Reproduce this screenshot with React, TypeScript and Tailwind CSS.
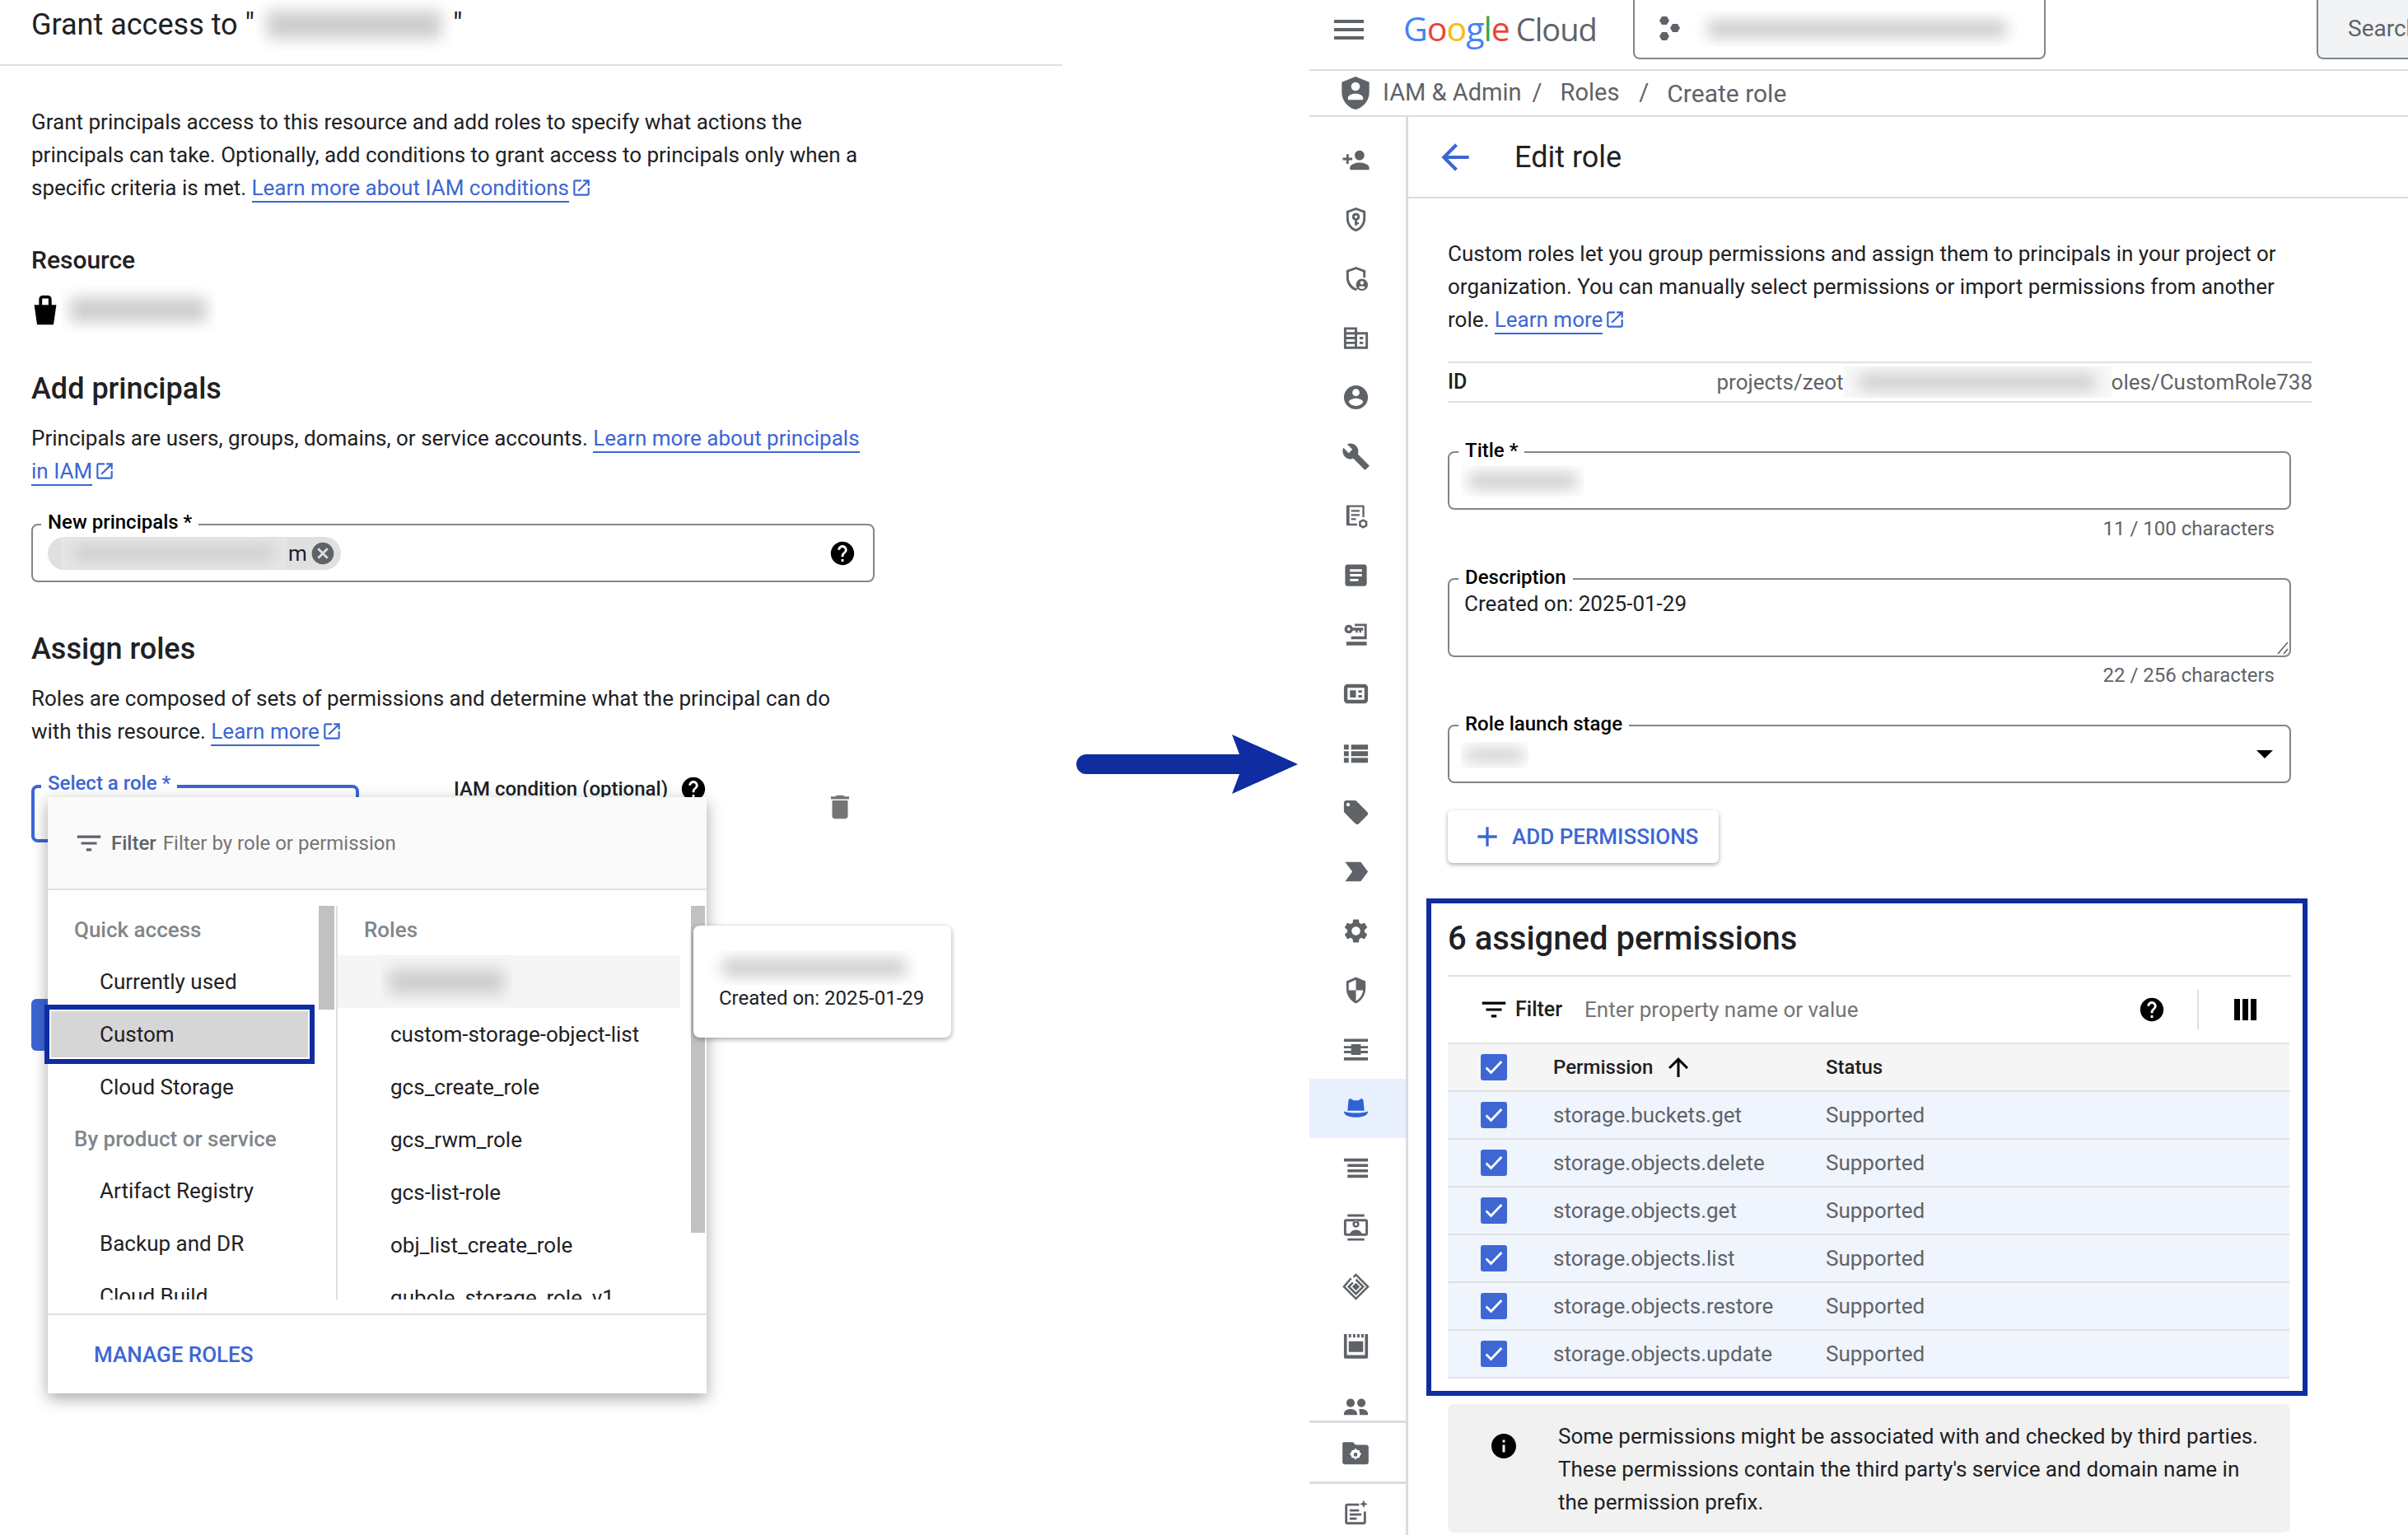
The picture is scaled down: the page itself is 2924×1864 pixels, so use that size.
import type { ReactNode } from "react";

const blue = "text-[#3c66d4]";

function Svg({ size = 35, className = "fill-[#5f6368]", children }: { size?: number; className?: string; children: ReactNode }) {
  return (
    <svg width={size} height={size} viewBox="0 0 24 24" className={`shrink-0 ${className}`}>
      {children}
    </svg>
  );
}

function External() {
  return (
    <svg width="26" height="26" viewBox="0 0 24 24" className="inline-block fill-[#3c66d4] ml-[2px] align-[-4px]">
      <path d="M19 19H5V5h7V3H5c-1.11 0-2 .9-2 2v14c0 1.1.89 2 2 2h14c1.1 0 2-.9 2-2v-7h-2v7zM14 3v2h3.59l-9.83 9.83 1.41 1.41L19 6.41V10h2V3h-7z" />
    </svg>
  );
}

function Link({ children }: { children: ReactNode }) {
  return <span className={`${blue} border-b-2 border-[#3c66d4] pb-[1px]`}>{children}</span>;
}

function Help({ size = 34 }: { size?: number }) {
  return (
    <Svg size={size} className="fill-black">
      <path d="M12 2C6.48 2 2 6.48 2 12s4.48 10 10 10 10-4.48 10-10S17.52 2 12 2zm1 17h-2v-2h2v2zm2.07-7.75l-.9.92C13.45 12.9 13 13.5 13 15h-2v-.5c0-1.1.45-2.1 1.17-2.83l1.24-1.26c.37-.36.59-.86.59-1.41 0-1.1-.9-2-2-2s-2 .9-2 2H8c0-2.21 1.79-4 4-4s4 1.79 4 4c0 .88-.36 1.68-.93 2.25z" />
    </Svg>
  );
}

function FilterIcon({ className }: { className: string }) {
  return (
    <Svg size={38} className={className}>
      <path d="M10 18h4v-2h-4v2zM3 6v2h18V6H3zm3 7h12v-2H6v2z" />
    </Svg>
  );
}

function Blur({ className, bg = "bg-white" }: { className: string; bg?: string }) {
  return (
    <div className={`overflow-hidden flex items-center justify-center ${bg} ${className}`}>
      <div className="w-[88%] h-[52%] bg-[#cdcdcd] blur-[9px]" />
    </div>
  );
}

function Legend({ children, className = "text-black -top-[17px] left-[11px]" }: { children: ReactNode; className?: string }) {
  return (
    <span className={`absolute bg-white px-[8px] text-[24px] leading-[28px] font-medium ${className}`}>
      {children}
    </span>
  );
}

const sideIcons: ReactNode[] = [
  <path key="a" d="M15 12c2.21 0 4-1.79 4-4s-1.79-4-4-4-4 1.79-4 4 1.79 4 4 4zm-9-2V7H4v3H1v2h3v3h2v-3h3v-2H6zm9 4c-2.67 0-8 1.34-8 4v2h16v-2c0-2.66-5.33-4-8-4z" />,
  <path key="b" fillRule="evenodd" d="M12 2 4 5v6.09c0 5.05 3.41 9.76 8 10.91 4.59-1.15 8-5.86 8-10.91V5l-8-3zm6 9.09c0 4-2.55 7.7-6 8.83-3.45-1.13-6-4.82-6-8.83V6.31l6-2.25 6 2.25v4.78zM12 6.5a3.2 3.2 0 0 0-1 6.24V17h2v-1h1.5v-1.6H13v-1.66A3.2 3.2 0 0 0 12 6.5zm0 2a1.2 1.2 0 1 1 0 2.4 1.2 1.2 0 0 1 0-2.4z" />,
  <path key="c" fillRule="evenodd" d="M12 2 4 5v6.09c0 5.05 3.41 9.76 8 10.91l1.5-1.8c-3.9-.6-7.5-4.9-7.5-9.11V6.31l6-2.25 6 2.25V11h2V5l-8-3zm5 10a5 5 0 1 0 0 10 5 5 0 0 0 0-10zm0 1.8a1.5 1.5 0 1 1 0 3 1.5 1.5 0 0 1 0-3zm0 6.7c-1.1 0-2-.5-2.7-1.3.6-.7 1.7-1 2.7-1s2.1.3 2.7 1c-.7.8-1.6 1.3-2.7 1.3z" />,
  <path key="d" fillRule="evenodd" d="M2 3h11v4h9v14H2V3zm2 2v2h7V5H4zm0 4v2h7V9H4zm0 4v2h7v-2H4zm0 4v2h7v-2H4zm9-8v10h7V9h-7zm2 2h3v2h-3v-2zm0 4h3v2h-3v-2z" />,
  <path key="e" d="M12 2C6.48 2 2 6.48 2 12s4.48 10 10 10 10-4.48 10-10S17.52 2 12 2zm0 3c1.66 0 3 1.34 3 3s-1.34 3-3 3-3-1.34-3-3 1.34-3 3-3zm0 14.2c-2.5 0-4.71-1.28-6-3.22.03-1.99 4-3.08 6-3.08 1.99 0 5.97 1.09 6 3.08-1.29 1.94-3.5 3.22-6 3.22z" />,
  <path key="f" d="M22.7 19l-9.1-9.1c.9-2.3.4-5-1.5-6.9-2-2-5-2.4-7.4-1.3L9 6 6 9 1.6 4.7C.4 7.1.9 10.1 2.9 12.1c1.9 1.9 4.6 2.4 6.9 1.5l9.1 9.1c.4.4 1 .4 1.4 0l2.3-2.3c.5-.4.5-1.1.1-1.4z" />,
  <path key="g" fillRule="evenodd" d="M5 3h13c.6 0 1 .4 1 1v9h-1.6V4.6H6.6v13.8H13V20H5c-.6 0-1-.4-1-1V4c0-.6.4-1 1-1zm3 4h7v1.6H8V7zm0 3.4h7V12H8v-1.6zm0 3.4h4v1.6H8v-1.6zM18 14.5l3.5 2v4L18 22.5l-3.5-2v-4l3.500-2zm0 2.200a1.800 1.800 0 1 0 0 3.600 1.800 1.800 0 0 0 0-3.600z" />,
  <path key="h" d="M19 3H5c-1.1 0-2 .9-2 2v14c0 1.1.9 2 2 2h14c1.1 0 2-.9 2-2V5c0-1.1-.9-2-2-2zm-5 14H7v-2h7v2zm3-4H7v-2h10v2zm0-4H7V7h10v2z" />,
  <path key="i" fillRule="evenodd" d="M4 18h17v3H4v-3zM11 3h10v13H8v-2.500h11V5h-8V3zM6 4a3.500 3.500 0 0 1 3.300 2.300H18v2.400h-1.500v1.800h-1.700V8.700h-1.300v1.800h-1.700V8.700H9.300A3.500 3.500 0 1 1 6 4zm0 2.200a1.300 1.300 0 1 0 0 2.600 1.300 1.300 0 0 0 0-2.600z" />,
  <path key="j" fillRule="evenodd" d="M5 4h14a3 3 0 0 1 3 3v10a3 3 0 0 1-3 3H5a3 3 0 0 1-3-3V7a3 3 0 0 1 3-3zm0 3v10h14V7H5zm2 2h5v6H7V9zm7 0h3v2h-3V9zm0 4h3v2h-3v-2z" />,
  <path key="k" d="M2 5h4v4H2zM8 5h14v4H8zM2 10.500h4v4H2zM8 10.500h14v4H8zM2 16h4v4H2zM8 16h14v4H8z" />,
  <path key="l" d="M21.410 11.580l-9-9C12.050 2.220 11.550 2 11 2H4c-1.100 0-2 .9-2 2v7c0 .55.22 1.050.59 1.420l9 9c.36.36.86.58 1.410.58s1.050-.22 1.410-.59l7-7c.37-.36.59-.86.59-1.410s-.23-1.060-.59-1.420zM5.500 7C4.670 7 4 6.330 4 5.500S4.670 4 5.500 4 7 4.670 7 5.500 6.330 7 5.500 7z" />,
  <path key="m" d="M3 20h13l6-8-6-8H3l6 8z" />,
  <path key="n" d="M19.140 12.940c.04-.3.06-.61.06-.94 0-.32-.02-.64-.07-.94l2.030-1.580c.18-.14.23-.41.12-.61l-1.920-3.320c-.12-.22-.37-.29-.59-.22l-2.390.96c-.5-.38-1.030-.7-1.620-.94l-.36-2.540c-.04-.24-.24-.41-.48-.41h-3.840c-.24 0-.43.17-.47.41l-.36 2.540c-.59.24-1.130.57-1.620.94l-2.390-.96c-.22-.08-.47 0-.59.22L2.740 8.870c-.12.21-.08.47.12.61l2.030 1.580c-.05.3-.09.63-.09.94s.02.64.07.94l-2.030 1.580c-.18.14-.23.41-.12.61l1.920 3.320c.12.22.37.29.59.22l2.390-.96c.5.38 1.030.7 1.620.94l.36 2.540c.05.24.24.41.48.41h3.840c.24 0 .44-.17.47-.41l.36-2.540c.59-.24 1.130-.56 1.620-.94l2.390.96c.22.08.47 0 .59-.22l1.920-3.320c.12-.22.07-.47-.12-.61l-2.010-1.580zM12 15.600c-1.980 0-3.600-1.620-3.600-3.600s1.620-3.600 3.600-3.600 3.600 1.620 3.600 3.600-1.620 3.600-3.600 3.600z" />,
  <path key="o" d="M12 1 4 4.500v6c0 5.500 3.400 10.500 8 12.500 4.600-2 8-7 8-12.500v-6L12 1zm0 11h6c-.5 3.900-2.800 7.400-6 8.800V12H6V6l6-2.700V12z" />,
  <path key="p" d="M2 3h20v2.500H2zM2 18.500h20V21H2zM8 7.500h8V9h6v2h-6v2h6v2h-6v1.500H8V15H2v-2h6v-2H2V9h6z" />,
  <path key="q" d="M7.500 3.500 10 5h4l2.500-1.500c1 0 1.500.8 1.700 1.700l.8 8.300H5l.8-8.300c.2-.9.700-1.700 1.700-1.700zM2 14c2 .9 6 1.400 10 1.400S20 14.900 22 14c0 3.300-4 5-10 5S2 17.300 2 14z" />,
  <path key="r" d="M2 4h20v2.500H2zM5 8.500h17V11H5zM5 13h17v2.500H5zM5 17.500h17V20H5z" />,
  <path key="s" fillRule="evenodd" d="M5 1h14v2H5V1zm0 20h14v2H5v-2zM4 5h16a2 2 0 0 1 2 2v10a2 2 0 0 1-2 2H4a2 2 0 0 1-2-2V7a2 2 0 0 1 2-2zm0 2v10h3.200c.6-2 2.700-3 4.800-3s4.200 1 4.800 3H20V7H4zm8-.5a2.800 2.800 0 1 1 0 5.600 2.800 2.800 0 0 1 0-5.600zm0 1.700a1.100 1.100 0 1 0 0 2.200 1.100 1.100 0 0 0 0-2.200z" />,
  <g key="t" className="fill-none stroke-[#5f6368] stroke-[1.7]">
    <path d="M8 5l-6 7 10 10 10-10L12 2l-2 2" />
    <path d="M12 6l6 6-6 6-6-6 3.500-3.500" />
    <path d="M12 10l2 2-2 2-2-2z" className="fill-[#5f6368]" />
  </g>,
  <path key="u" fillRule="evenodd" d="M2 2h2.500v17.500h15V2H22v19a1.500 1.500 0 0 1-1.500 1.500h-17A1.500 1.500 0 0 1 2 21V2zm4 0h2v3H6V2zm3.500 0h2v3h-2V2zm3.500 0h2v3h-2V2zm3.500 0h2v3h-2V2zM6 8h12v9H6V8z" />,
  <path key="v" d="M7.500 6.500a3.500 3.500 0 1 1 0 7 3.500 3.500 0 0 1 0-7zm9 0a3.500 3.500 0 1 1 0 7 3.500 3.500 0 0 1 0-7zM2 19c0-2.600 3-4 5.500-4s5.500 1.400 5.500 4v1H2v-1zm12.500-3.700c.7-.2 1.400-.3 2-.3 2.500 0 5.500 1.400 5.500 4v1h-7v-1.500c0-1.300-.2-2.300-.5-3.200z" />,
];

const quick = ["Currently used", "Custom", "Cloud Storage"];
const product = ["Artifact Registry", "Backup and DR", "Cloud Build"];
const roles = ["custom-storage-object-list", "gcs_create_role", "gcs_rwm_role", "gcs-list-role", "obj_list_create_role", "qubole_storage_role_v1"];
const perms = ["storage.buckets.get", "storage.objects.delete", "storage.objects.get", "storage.objects.list", "storage.objects.restore", "storage.objects.update"];

function Check() {
  return (
    <div className="w-[32px] h-[32px] rounded-[3px] bg-[#3f67d4] flex items-center justify-center">
      <svg width="28" height="28" viewBox="0 0 24 24" className="fill-none stroke-white stroke-[2.4]">
        <path d="M4 12.500l5 5L20 6" />
      </svg>
    </div>
  );
}

function RoleDropdown() {
  return (
    <div className="absolute left-[58px] top-[968px] w-[800px] h-[724px] bg-white shadow-[0_6px_18px_rgba(0,0,0,0.35)] text-[24px] z-10">
      <div className="h-[113px] bg-[#fafafa] border-b-2 border-[#e0e0e0] flex items-center pl-[31px]">
        <FilterIcon className="fill-[#5f6368]" />
        <span className="ml-[8px] font-medium text-[#5f6368]">Filter</span>
        <span className="ml-[8px] text-[#757575]">Filter by role or permission</span>
      </div>
      <div className="h-[514px] pt-[19px]">
        <div className="flex h-[478px] overflow-hidden text-[26px] leading-[64px]">
          <div className="relative w-[352px] shrink-0 border-r-2 border-[#e0e0e0]">
            <div className="h-[60px] leading-[58px] pl-[32px] font-medium text-[#80868b]">Quick access</div>
            {quick.map((q) => (
              <div key={q} className={`h-[64px] pl-[63px] w-[322px] ${q === "Custom" ? "bg-[#d6d6d6]" : ""}`}>{q}</div>
            ))}
            <div className="h-[62px] leading-[62px] pl-[32px] font-medium text-[#80868b]">By product or service</div>
            {product.map((q) => (
              <div key={q} className="h-[64px] pl-[63px]">{q}</div>
            ))}
            <div className="absolute right-[2px] top-0 w-[19px] h-[126px] bg-[#c1c1c1]" />
          </div>
          <div className="relative flex-1">
            <div className="h-[60px] leading-[58px] pl-[32px] font-medium text-[#80868b]">Roles</div>
            <div className="h-[64px] w-[416px] bg-[#f5f5f5] pl-[52px] flex items-center">
              <Blur className="w-[160px] h-[56px]" bg="bg-[#f5f5f5]" />
            </div>
            {roles.map((r) => (
              <div key={r} className="h-[64px] pl-[64px]">{r}</div>
            ))}
            <div className="absolute right-[2px] top-0 w-[17px] h-[397px] bg-[#c1c1c1]" />
          </div>
        </div>
      </div>
      <div className="h-[97px] border-t-2 border-[#e0e0e0] flex items-center pl-[56px] text-[26px] font-medium text-[#3c66d4]">
        MANAGE ROLES
      </div>
      <div className="absolute -left-[4px] top-[252px] w-[328px] h-[72px] border-[6px] border-[#0f2da0] shadow-[inset_0_0_0_2px_#ffffff]" />
    </div>
  );
}

function LeftPanel() {
  return (
    <div className="relative w-[1300px] shrink-0 text-[26px] leading-[40px] text-[#202124]">
      <div className="h-[80px] border-b-2 border-[#e0e0e0] w-[1290px] flex items-center pl-[38px] pb-[18px] text-[36px] text-[#202124]">
        <span>Grant access to "</span>
        <Blur className="w-[241px] h-[64px]" />
        <span>"</span>
      </div>
      <div className="pl-[38px]">
        <p className="mt-[48px]">
          Grant principals access to this resource and add roles to specify what actions the<br />
          principals can take. Optionally, add conditions to grant access to principals only when a<br />
          specific criteria is met. <Link>Learn more about IAM conditions</Link><External />
        </p>
        <div className="mt-[48px] text-[30px] font-medium">Resource</div>
        <div className="mt-[12px] h-[56px] flex items-center">
          <svg width="46" height="46" viewBox="0 0 24 24" className="fill-black -ml-[6px] shrink-0">
            <path d="M5 9h14l-1.800 12.500H6.800L5 9zM8 9V5.500C8 4 9 3 10.500 3h3C15 3 16 4 16 5.500V9h-2V5h-4v4H8z" />
          </svg>
          <Blur className="w-[188px] h-[56px] -ml-[4px]" />
        </div>
        <div className="mt-[44px] text-[36px] leading-[48px] font-medium">Add principals</div>
        <p className="mt-[16px]">
          Principals are users, groups, domains, or service accounts. <Link>Learn more about principals</Link><br />
          <Link>in IAM</Link><External />
        </p>
        <div className="relative mt-[44px] w-[1024px] h-[71px] border-2 border-[#80868b] rounded-[8px] flex items-center pl-[18px] pr-[20px]">
          <Legend className="text-black -top-[18px] left-[10px]">New principals *</Legend>
          <div className="w-[356px] h-[40px] rounded-full bg-[#e0e0e0] flex items-center">
            <Blur className="w-[274px] h-[38px] ml-[16px]" bg="bg-[#e6e6e6]" />
            <span className="ml-[2px]">m</span>
            <svg width="32" height="32" viewBox="0 0 24 24" className="fill-[#5f6368] ml-[3px] shrink-0">
              <path d="M12 2C6.470 2 2 6.470 2 12s4.470 10 10 10 10-4.470 10-10S17.530 2 12 2zm5 13.590L15.590 17 12 13.410 8.410 17 7 15.590 10.590 12 7 8.410 8.410 7 12 10.590 15.590 7 17 8.410 13.410 12 17 15.590z" />
            </svg>
          </div>
          <div className="ml-auto"><Help /></div>
        </div>
        <div className="mt-[57px] text-[36px] leading-[48px] font-medium">Assign roles</div>
        <p className="mt-[16px]">
          Roles are composed of sets of permissions and determine what the principal can do<br />
          with this resource. <Link>Learn more</Link><External />
        </p>
        <div className="mt-[45px] h-[70px] flex items-start">
          <div className="relative w-[398px] h-[70px] border-4 border-[#3c66d4] rounded-[8px] shrink-0">
            <Legend className="text-[#3c66d4] left-[8px] -top-[20px]">Select a role *</Legend>
          </div>
          <div className="ml-[115px] -mt-[12px] text-[24px] leading-[30px] font-medium flex items-center gap-[14px] shrink-0">
            IAM condition (optional)
            <Help />
          </div>
          <div className="ml-[142px] mt-[8px]">
            <Svg size={38} className="fill-[#757575]">
              <path d="M6 19c0 1.100.9 2 2 2h8c1.100 0 2-.9 2-2V7H6v12zM19 4h-3.500l-1-1h-5l-1 1H5v2h14V4z" />
            </Svg>
          </div>
        </div>
        <div className="mt-[190px] w-[200px] h-[63px] bg-[#3c66d4] rounded-[6px]" />
      </div>
      <RoleDropdown />
      <div className="absolute left-[842px] top-[1124px] w-[313px] h-[136px] bg-white rounded-[8px] shadow-[0_2px_6px_rgba(0,0,0,0.35)] z-20 text-[24px] leading-[30px] pl-[31px] pt-[30px]">
        <Blur className="w-[253px] h-[42px] -ml-[11px]" />
        <div className="mt-[1px]">Created on: 2025-01-29</div>
      </div>
    </div>
  );
}

function Arrow() {
  return (
    <div className="w-[290px] shrink-0 pl-[7px] pt-[892px]">
      <svg width="270" height="72" viewBox="0 0 270 72" className="fill-[#0f2da0]">
        <path d="M12 24H198L189 0 269 36 189 72 198 48H12a12 12 0 0 1 0-24z" />
      </svg>
    </div>
  );
}

function TopBar() {
  return (
    <>
      <div className="h-[86px] border-b-2 border-[#dadce0] flex items-start relative overflow-hidden">
        <div className="ml-[30px] mt-[24px] w-[36px] h-[24px] flex flex-col justify-between shrink-0">
          <div className="h-[4px] bg-[#5f6368]" />
          <div className="h-[4px] bg-[#5f6368]" />
          <div className="h-[4px] bg-[#5f6368]" />
        </div>
        <div className="ml-[48px] mt-[4px] text-[41px] leading-[60px] tracking-[-1px] [font-family:'Open_Sans',sans-serif] w-[235px] shrink-0 whitespace-nowrap">
          <span className="text-[#4285f4]">G</span><span className="text-[#ea4335]">o</span><span className="text-[#fbbc05]">o</span><span className="text-[#4285f4]">g</span><span className="text-[#34a853]">l</span><span className="text-[#ea4335]">e</span>
          <span className="text-[#5f6368] ml-[8px] text-[38px]">Cloud</span>
        </div>
        <div className="ml-[44px] w-[501px] h-[72px] border-2 border-t-0 border-[#80868b] rounded-b-[8px] flex items-center pl-[28px] gap-[8px] shrink-0">
          <svg width="28" height="30" viewBox="0 0 28 30" className="fill-[#5f6368] shrink-0">
            <path d="M5 0h6l3 5-3 5H5L2 5zM18 9h6l3 5-3 5h-6l-3-5zM5 19h6l3 5-3 5H5l-3-5z" />
          </svg>
          <Blur className="w-[412px] h-[42px]" />
        </div>
        <div className="ml-[329px] w-[140px] h-[72px] shrink-0 bg-[#f1f3f4] border-2 border-t-0 border-[#80868b] rounded-bl-[8px] border-r-0 pl-[36px] flex items-center text-[28px] text-[#5f6368]">
          Search
        </div>
      </div>
      <div className="h-[56px] border-b-2 border-[#dadce0] flex items-center pl-[36px] text-[29px] text-[#5f6368]">
        <svg width="40" height="44" viewBox="0 0 24 26" className="fill-[#5f6368] shrink-0">
          <path fillRule="evenodd" d="M12 1 2 5v7.500C2 18.500 6.300 23.500 12 25c5.700-1.500 10-6.500 10-12.500V5L12 1zm0 4a3.200 3.200 0 1 1 0 6.400A3.200 3.200 0 0 1 12 5zm0 8.500c2.500 0 5.500 1.200 5.500 3v1.500h-11v-1.500c0-1.800 3-3 5.500-3z" />
        </svg>
        <span className="ml-[13px]">IAM &amp; Admin</span>
        <span className="ml-[13px]">/</span>
        <span className="ml-[22px]">Roles</span>
        <span className="ml-[24px]">/</span>
        <span className="ml-[22px] text-[30px]">Create role</span>
      </div>
    </>
  );
}

function Sidebar() {
  return (
    <div className="w-[120px] shrink-0 border-r-[3px] border-[#dadce0] flex flex-col h-full">
      <div className="h-[1586px] overflow-hidden border-b-[3px] border-[#dadce0] pt-[16px]">
        {sideIcons.map((icon, i) => (
          <div key={i} className={`h-[72px] flex items-center justify-center pr-[5px] ${i === 16 ? "bg-[#e8f0fe]" : ""}`}>
            <Svg className={i === 16 ? "fill-[#2f62d6]" : "fill-[#5f6368]"}>{icon}</Svg>
          </div>
        ))}
      </div>
      <div className="h-[74px] border-b-[3px] border-[#dadce0] flex items-center justify-center pr-[5px]">
        <Svg size={38}>
          <path fillRule="evenodd" d="M3 4h7l2 2h8a2 2 0 0 1 2 2v11a2 2 0 0 1-2 2H4a2 2 0 0 1-2-2V5a1 1 0 0 1 1-1zm9 4.500l-1 1.500-1.800.1-.6 1.700-1.100 1.200 1.100 1.300.6 1.700 1.800.1 1 1.400 1-1.400 1.800-.1.6-1.700 1.100-1.300-1.100-1.200-.6-1.700L13 10l-1-1.500zm0 3.500a1.500 1.500 0 1 1 0 3 1.500 1.500 0 0 1 0-3z" />
        </Svg>
      </div>
      <div className="flex-1 flex items-center justify-center pr-[5px] pt-[8px]">
        <Svg size={34}>
          <path fillRule="evenodd" d="M5 4h10v2H5v14h14V11h2v9a2 2 0 0 1-2 2H5a2 2 0 0 1-2-2V6a2 2 0 0 1 2-2zm2 5h8v2H7V9zm0 3.500h10v2H7v-2zM7 16h6v2H7v-2zM19 1l1 2.500L22.500 4.500 20 5.500 19 8l-1-2.500-2.500-1L18 3.500 19 1z" />
        </Svg>
      </div>
    </div>
  );
}

function Field({ label, height, children }: { label: string; height: string; children?: ReactNode }) {
  return (
    <div className={`relative w-[1024px] ${height} border-2 border-[#80868b] rounded-[8px] pl-[18px]`}>
      <Legend>{label}</Legend>
      {children}
    </div>
  );
}

function Permissions() {
  return (
    <div className="mt-[43px] -ml-[26px] w-[1070px] h-[604px] border-[6px] border-[#0f2da0] shadow-[inset_0_0_0_2px_#ffffff] pl-[20px]">
      <div className="w-[1024px] h-[89px] border-b-2 border-[#e0e0e0] text-[40px] leading-[86px] font-medium text-[#202124]">
        6 assigned permissions
      </div>
      <div className="w-[1024px] h-[80px] flex items-center pl-[37px] text-[25px]">
        <FilterIcon className="fill-black" />
        <span className="ml-[7px] font-medium text-[#202124]">Filter</span>
        <span className="ml-[27px] text-[26px] text-[#757575]">Enter property name or value</span>
        <div className="ml-auto"><Help /></div>
        <div className="ml-[38px] w-[2px] h-[48px] bg-[#e0e0e0]" />
        <svg width="28" height="26" viewBox="0 0 28 26" className="fill-black ml-[43px] mr-[41px]">
          <path d="M0 0h7v26H0zM10 0h7v26h-7zM20 0h7v26h-7z" />
        </svg>
      </div>
      <div className="w-[1022px] border-t-2 border-[#e0e0e0]">
        <div className="relative h-[56px] bg-[#f5f5f5] border-b-2 border-[#e0e0e0] flex items-center pl-[40px] text-[24px] font-medium text-[#202124] box-content">
          <Check />
          <span className="ml-[56px]">Permission</span>
          <svg width="36" height="36" viewBox="0 0 24 24" className="fill-black ml-[13px]">
            <path d="M4 12l1.410 1.410L11 7.830V20h2V7.830l5.580 5.590L20 12l-8-8-8 8z" />
          </svg>
          <span className="absolute left-[459px]">Status</span>
        </div>
        {perms.map((p) => (
          <div key={p} className="h-[56px] bg-[#f0f4fc] border-b-2 border-[#e0e0e0] flex items-center pl-[40px] text-[26px] text-[#5f6368] box-content">
            <Check />
            <span className="ml-[56px] w-[331px]">{p}</span>
            <span>Supported</span>
          </div>
        ))}
      </div>
    </div>
  );
}

function RightPanel() {
  return (
    <div className="w-[1334px] shrink-0 h-full flex flex-col text-[#202124]">
      <TopBar />
      <div className="flex-1 flex min-h-0">
        <Sidebar />
        <div className="flex-1 min-w-0">
          <div className="h-[97px] border-b-2 border-[#dadce0] flex items-center pl-[32px] box-content">
            <svg width="50" height="50" viewBox="0 0 24 24" className="fill-[#3c66d4] shrink-0">
              <path d="M20 11H7.830l5.590-5.590L12 4l-8 8 8 8 1.410-1.410L7.830 13H20v-2z" />
            </svg>
            <span className="ml-[47px] text-[36px]">Edit role</span>
          </div>
          <div className="pl-[48px] text-[26px] leading-[40px]">
            <p className="mt-[47px]">
              Custom roles let you group permissions and assign them to principals in your project or<br />
              organization. You can manually select permissions or import permissions from another<br />
              role. <Link>Learn more</Link><External />
            </p>
            <div className="mt-[31px] w-[1050px] h-[50px] border-y-2 border-[#e0e0e0] flex items-center justify-between">
              <span className="font-medium text-[25px]">ID</span>
              <span className="flex items-center text-[#5f6368]">
                projects/zeot
                <Blur className="w-[325px] h-[38px]" bg="bg-[#f8f8f8]" />
                oles/CustomRole738
              </span>
            </div>
            <div className="mt-[59px]">
              <Field label="Title *" height="h-[71px]">
                <Blur className="w-[150px] h-[38px] mt-[15px] -ml-[4px]" />
              </Field>
            </div>
            <div className="mt-[7px] w-[1004px] text-right text-[24px] leading-[32px] text-[#5f6368]">11 / 100 characters</div>
            <div className="mt-[44px]">
              <Field label="Description" height="h-[96px]">
                <div className="pt-[13px] leading-[32px]">Created on: 2025-01-29</div>
                <svg width="14" height="16" viewBox="0 0 14 16" className="absolute right-[1px] bottom-[1px] stroke-[#5f6368] stroke-[1.5]">
                  <path d="M1 15 13 1M8 15l5-6" />
                </svg>
              </Field>
            </div>
            <div className="mt-[6px] w-[1004px] text-right text-[24px] leading-[32px] text-[#5f6368]">22 / 256 characters</div>
            <div className="mt-[44px]">
              <Field label="Role launch stage" height="h-[71px]">
                <div className="flex items-center h-full pr-[20px]">
                  <Blur className="w-[82px] h-[32px] -ml-[4px] mt-[3px]" />
                  <span className="ml-auto w-0 h-0 border-x-[10px] border-x-transparent border-t-[10px] border-t-black" />
                </div>
              </Field>
            </div>
            <div className="mt-[33px] w-[329px] h-[64px] rounded-[6px] bg-white shadow-[0_2px_5px_rgba(0,0,0,0.35)] flex items-center pl-[28px] text-[26px] font-medium text-[#3c66d4]">
              <svg width="40" height="40" viewBox="0 0 24 24" className="fill-[#3c66d4] shrink-0">
                <path d="M19 13h-6v6h-2v-6H5v-2h6V5h2v6h6v2z" />
              </svg>
              <span className="ml-[10px]">ADD PERMISSIONS</span>
            </div>
            <Permissions />
            <div className="mt-[10px] w-[1023px] h-[156px] bg-[#f1f1f1] rounded-[8px] flex pl-[50px] pt-[19px]">
              <div className="mt-[14px]">
                <Svg size={36} className="fill-black">
                  <path d="M12 2C6.480 2 2 6.480 2 12s4.480 10 10 10 10-4.480 10-10S17.520 2 12 2zm1 15h-2v-6h2v6zm0-8h-2V7h2v2z" />
                </Svg>
              </div>
              <p className="ml-[48px]">
                Some permissions might be associated with and checked by third parties.<br />
                These permissions contain the third party's service and domain name in<br />
                the permission prefix.
              </p>
            </div>
          </div>
        </div>
      </div>
    </div>
  );
}

export default function App() {
  return (
    <div className="w-[2924px] h-[1864px] bg-white flex overflow-hidden [font-family:Roboto,sans-serif]">
      <LeftPanel />
      <Arrow />
      <RightPanel />
    </div>
  );
}
